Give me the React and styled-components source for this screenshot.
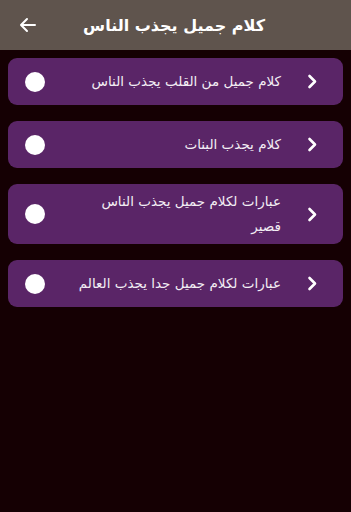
import React from "react";
import styled, { createGlobalStyle } from "styled-components";

const Global = createGlobalStyle`
  html, body { margin: 0; padding: 0; background: #150003; }
  body { font-family: "DejaVu Sans", "Noto Sans", sans-serif; }
  * { box-sizing: border-box; }
`;

const Page = styled.div`
  width: 351px;
  min-height: 512px;
  background: #150003;
  display: flex;
  flex-direction: column;
`;

const Header = styled.header`
  height: 50px;
  background: #5f544d;
  display: flex;
  align-items: center;
  padding: 0 86px 0 18px;
`;

const BackButton = styled.div`
  width: 18px;
  height: 20px;
  display: flex;
  align-items: center;
  justify-content: center;
`;

const Title = styled.h1`
  flex: 1;
  margin: 0;
  font-size: 16px;
  font-weight: bold;
  color: #ffffff;
  direction: rtl;
  text-align: right;
  white-space: nowrap;
`;

const List = styled.div`
  display: flex;
  flex-direction: column;
  gap: 16px;
  padding: 8px 8px;
`;

const Card = styled.div`
  direction: rtl;
  min-height: 47px;
  background: #5a2567;
  border-radius: 9px;
  display: flex;
  align-items: center;
  padding: 5px 25px 5px 17px;
`;

const Chevron = styled.div`
  width: 12px;
  display: flex;
  justify-content: center;
  flex-shrink: 0;
`;

const Label = styled.div`
  margin-right: 25px;
  ${(p) => (p.$w ? `width: ${p.$w}px;` : "")}
  color: #f3eef4;
  font-size: 13.5px;
  line-height: 25px;
`;

const Dot = styled.div`
  margin-right: auto;
  width: 20px;
  height: 20px;
  border-radius: 50%;
  background: #ffffff;
  flex-shrink: 0;
`;

const items = [
  { t: "كلام جميل من القلب يجذب الناس" },
  { t: "كلام يجذب البنات" },
  { t: "عبارات لكلام جميل يجذب الناس قصير", w: 186 },
  { t: "عبارات لكلام جميل جدا يجذب العالم" },
];

export default function App() {
  return (
    <Page>
      <Global />
      <Header>
        <BackButton>
          <svg width="17" height="16" viewBox="0 0 17 16" fill="none" stroke="#fff" strokeWidth="2" strokeLinecap="round" strokeLinejoin="round">
            <path d="M16 8H2M8 2L2 8l6 6" />
          </svg>
        </BackButton>
        <Title>كلام جميل يجذب الناس</Title>
      </Header>
      <List>
        {items.map((it, i) => (
          <Card key={i}>
            <Chevron>
              <svg width="10" height="15" viewBox="0 0 10 15" fill="none" stroke="#fff" strokeWidth="2.6" strokeLinecap="round" strokeLinejoin="round">
                <path d="M2.5 2l5.5 5.5-5.5 5.5" />
              </svg>
            </Chevron>
            <Label $w={it.w}>{it.t}</Label>
            <Dot />
          </Card>
        ))}
      </List>
    </Page>
  );
}
